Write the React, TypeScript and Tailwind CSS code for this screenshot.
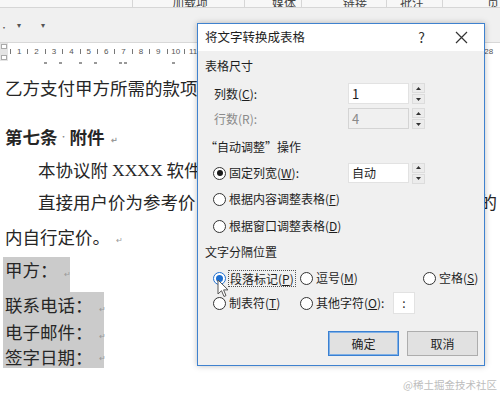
import React from "react";

function Radio({ checked, blue }: { checked?: boolean; blue?: boolean }) {
  return (
    <span
      className={
        blue
          ? "w-[13px] h-[13px] rounded-full border border-[#1f6fd0] bg-white flex items-center justify-center shrink-0"
          : "w-[13px] h-[13px] rounded-full border border-[#333333] bg-white flex items-center justify-center shrink-0"
      }
    >
      {checked && (
        <span className={blue ? "w-[7px] h-[7px] rounded-full bg-[#1f6fd0]" : "w-[6px] h-[6px] rounded-full bg-[#1a1a1a]"} />
      )}
    </span>
  );
}

function Spin() {
  return (
    <div className="flex flex-col gap-[1px] w-[13px] ml-[3px]">
      <div className="h-[10px] bg-[#ececec] border border-[#dcdcdc] flex items-center justify-center">
        <svg width="5" height="3" viewBox="0 0 5 3">
          <path d="M0 3L2.5 0L5 3Z" fill="#333" />
        </svg>
      </div>
      <div className="h-[10px] bg-[#ececec] border border-[#dcdcdc] flex items-center justify-center">
        <svg width="5" height="3" viewBox="0 0 5 3">
          <path d="M0 0L2.5 3L5 0Z" fill="#333" />
        </svg>
      </div>
    </div>
  );
}

function Mark() {
  return <span className="text-[8px] text-[#9a9a9a] ml-[6px] self-end mb-[4px]">↵</span>;
}

export default function App() {
  const nums = Array.from({ length: 28 }, (_, i) => i + 1);
  return (
    <div className="relative w-[500px] h-[394px] overflow-hidden bg-white font-['Noto_Sans_CJK_SC',sans-serif]">
      {/* top tab strip */}
      <div className="h-[8px] bg-[#f7f7f7] border-b border-[#d6d6d6] flex text-[12px] leading-[12px] text-[#444] overflow-hidden">
        <div className="w-[133px] shrink-0 border-r border-[#d6d6d6]" />
        <div className="w-[112px] shrink-0 border-r border-[#d6d6d6] pl-[39px]"><span className="block -mt-[3px]">加载项</span></div>
        <div className="w-[57px] shrink-0 border-r border-[#d6d6d6] pl-[27px]"><span className="block -mt-[3px]">媒体</span></div>
        <div className="w-[85px] shrink-0 border-r border-[#d6d6d6] pl-[41px]"><span className="block -mt-[3px]">链接</span></div>
        <div className="w-[56px] shrink-0 border-r border-[#d6d6d6] pl-[13px]"><span className="block -mt-[3px]">批注</span></div>
        <div className="w-[57px] shrink-0 pl-[44px]"><span className="block -mt-[3px]">页</span></div>
      </div>
      {/* ribbon */}
      <div className="h-[34px] bg-[#f0f0f0] flex items-center text-[8px] text-[#555]">
        <span className="ml-[0px] mt-[6px]">•</span>
        <span className="ml-[9px]">▾</span>
        <span className="ml-[20px]">▾</span>
      </div>
      {/* ruler */}
      <div className="h-[18px] bg-white border-t border-[#d8d8d8] flex items-center">
        <div className="w-[8px] h-[18px] bg-[#e4e4e4] flex flex-col items-center justify-between py-[1px] shrink-0">
          <span className="w-[6px] h-[5px] border border-[#aaaaaa] bg-white" />
          <span className="w-[6px] h-[5px] border border-[#aaaaaa] bg-white" />
        </div>
        <div className="flex ml-[2px] items-center">
          {nums.map((n) => (
            <div key={n} className="w-[17.4px] shrink-0 flex items-center h-[9px]">
              <span className="w-[1px] h-[5px] bg-[#777777] shrink-0" />
              <span className="flex-1 text-center text-[8px] leading-[9px] text-[#555] whitespace-nowrap font-['Liberation_Sans',sans-serif]">
                {n}
              </span>
            </div>
          ))}
        </div>
      </div>
      {/* tab stop marks */}
      <div className="h-[6px] flex items-center">
        <span className="ml-[44px] w-[3px] h-[2px] bg-[#999]" />
        <span className="ml-[12px] w-[3px] h-[2px] bg-[#999]" />
        <span className="ml-[17px] w-[3px] h-[2px] bg-[#999]" />
        <span className="ml-[12px] w-[3px] h-[2px] bg-[#999]" />
        <span className="ml-[22px] w-[3px] h-[2px] bg-[#999]" />
        <span className="ml-[2px] w-[3px] h-[2px] bg-[#999]" />
        <span className="ml-[45px] w-[3px] h-[2px] bg-[#999]" />
      </div>
      {/* document */}
      <div className="text-[17.5px] text-[#262626] whitespace-nowrap">
        <div className="mt-[9px] h-[26px] pl-[5px] flex items-center">乙方支付甲方所需的款项后，</div>
        <div className="mt-[23px] h-[26px] pl-[5px] flex items-center font-bold">
          第七条<span className="text-[8px] font-normal text-[#888] mx-[2px]">·</span>附件<Mark />
        </div>
        <div className="mt-[7px] h-[26px] pl-[38px] flex items-center">
          本协议附 <span className="font-['Liberation_Serif',serif] mx-[4px]">XXXX</span> 软件产品
        </div>
        <div className="mt-[6px] h-[26px] pl-[38px] pr-[3px] flex items-center">
          <span>直接用户价为参考价，</span>
          <span className="ml-auto">的</span>
        </div>
        <div className="mt-[9px] h-[26px] pl-[5px] flex items-center">内自行定价。<Mark /></div>
        <div className="mt-[7px] ml-[3px] w-[67px] h-[35px] bg-[#cbcbcb]">
          <div className="h-[27px] pl-[2px] flex items-center">甲方：<Mark /></div>
        </div>
        <div className="ml-[3px] w-[101px] h-[76px] bg-[#cbcbcb]">
          <div className="h-[27px] pl-[2px] flex items-center">联系电话：<Mark /></div>
          <div className="h-[27px] pl-[2px] flex items-center">电子邮件：<Mark /></div>
          <div className="h-[22px] pl-[2px] flex items-center">签字日期：<Mark /></div>
        </div>
      </div>

      {/* dialog */}
      <div className="absolute left-[197px] top-[23px] w-[288px] h-[343px] border border-[#3f82cf] bg-[#f0f0f0] shadow-[0_0_6px_rgba(0,0,0,0.25)] text-[12px] text-[#1e1e1e] whitespace-nowrap">
        <div className="h-[27px] bg-white flex items-center pl-[7px]">
          <span className="text-[12.5px]">将文字转换成表格</span>
          <span className="ml-auto text-[14px] text-[#333] mr-[30px]">?</span>
          <svg width="13" height="13" viewBox="0 0 13 13" className="mr-[16px]">
            <path d="M1 1L12 12M12 1L1 12" stroke="#333" strokeWidth="1.2" />
          </svg>
        </div>
        <div className="mt-[5px] h-[20px] pl-[7px] flex items-center">表格尺寸</div>
        <div className="mt-[7px] h-[21px] pl-[16px] flex items-center">
          <span className="w-[134px]">列数(<span className="underline">C</span>):</span>
          <div className="w-[61px] h-[21px] bg-white border border-[#e2e2e2] flex items-center px-[3px] text-[13px]">1</div>
          <Spin />
        </div>
        <div className="mt-[4px] h-[21px] pl-[16px] flex items-center text-[#8a8a8a]">
          <span className="w-[134px]">行数(R):</span>
          <div className="w-[61px] h-[21px] bg-[#f0f0f0] border border-[#d4d4d4] flex items-center px-[3px] text-[13px]">4</div>
          <Spin />
        </div>
        <div className="mt-[8px] h-[20px] pl-[7px] flex items-center">“自动调整”操作</div>
        <div className="mt-[6px] h-[20px] pl-[15px] flex items-center">
          <Radio checked />
          <span className="ml-[3px] w-[119px]">固定列宽(<span className="underline">W</span>):</span>
          <div className="w-[61px] h-[20px] bg-white border border-[#e2e2e2] flex items-center px-[3px]">自动</div>
          <Spin />
        </div>
        <div className="mt-[6px] h-[20px] pl-[15px] flex items-center">
          <Radio />
          <span className="ml-[3px]">根据内容调整表格(<span className="underline">F</span>)</span>
        </div>
        <div className="mt-[7px] h-[20px] pl-[15px] flex items-center">
          <Radio />
          <span className="ml-[3px]">根据窗口调整表格(<span className="underline">D</span>)</span>
        </div>
        <div className="mt-[6px] h-[20px] pl-[7px] flex items-center">文字分隔位置</div>
        <div className="mt-[6px] h-[20px] pl-[15px] flex items-center">
          <div className="w-[87px] flex items-center">
            <Radio checked blue />
            <span className="ml-[2px] border border-dotted border-[#555] px-[1px] leading-[15px]">段落标记(<span className="underline">P</span>)</span>
          </div>
          <div className="w-[123px] flex items-center">
            <Radio />
            <span className="ml-[3px]">逗号(<span className="underline">M</span>)</span>
          </div>
          <div className="flex items-center">
            <Radio />
            <span className="ml-[3px]">空格(<span className="underline">S</span>)</span>
          </div>
        </div>
        <div className="mt-[4px] h-[22px] pl-[15px] flex items-center">
          <div className="w-[87px] flex items-center">
            <Radio />
            <span className="ml-[3px]">制表符(<span className="underline">T</span>)</span>
          </div>
          <div className="flex items-center">
            <Radio />
            <span className="ml-[3px] w-[77px]">其他字符(<span className="underline">O</span>):</span>
            <div className="w-[22px] h-[22px] bg-white border border-[#e2e2e2] flex items-center justify-center">:</div>
          </div>
        </div>
        <div className="mt-[17px] flex justify-end gap-[8px] pr-[6px]">
          <div className="w-[71px] h-[25px] bg-[#e1e1e1] border border-[#3a80d2] shadow-[inset_0_0_0_1px_#7fb0e6] flex items-center justify-center">确定</div>
          <div className="w-[71px] h-[25px] bg-[#e1e1e1] border border-[#adadad] flex items-center justify-center">取消</div>
        </div>
      </div>

      {/* mouse cursor */}
      <svg className="absolute left-[217px] top-[279px]" width="13" height="20" viewBox="0 0 13 20">
        <path d="M1 1L1 15L4.5 11.7L7 17.5L9 16.6L6.6 10.9L11 10.9Z" fill="white" stroke="#555" strokeWidth="1" />
      </svg>

      {/* watermark */}
      <div className="absolute left-[403px] top-[377px] text-[10.5px] text-[#bdbdbd] whitespace-nowrap">@稀土掘金技术社区</div>
    </div>
  );
}
